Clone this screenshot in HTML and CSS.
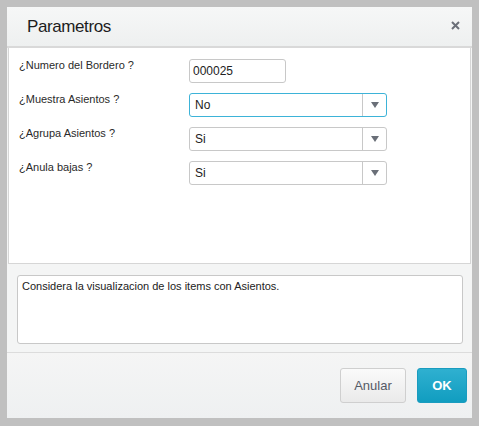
FILE: index.html
```html
<!DOCTYPE html>
<html lang="es">
<head>
    <meta charset="UTF-8">
    <title>Parametros</title>
    <link rel="stylesheet" href="styles.css">
</head>
<body>
    <div class="dialog">
        <header class="dialog-header">
            <h1>Parametros</h1>
            <svg class="close" width="9" height="9" viewBox="0 0 9 9">
                <path d="M1 1 L8 8 M8 1 L1 8" stroke="#6b6f78" stroke-width="2" />
            </svg>
        </header>
        <section class="params">
            <div class="row">
                <label>¿Numero del Bordero ?</label>
                <div class="field text-field">000025</div>
            </div>
            <div class="row">
                <label>¿Muestra Asientos ?</label>
                <div class="field select focused">
                    <span class="value">No</span>
                    <span class="arrow"></span>
                </div>
            </div>
            <div class="row">
                <label>¿Agrupa Asientos ?</label>
                <div class="field select">
                    <span class="value">Si</span>
                    <span class="arrow"></span>
                </div>
            </div>
            <div class="row">
                <label>¿Anula bajas ?</label>
                <div class="field select">
                    <span class="value">Si</span>
                    <span class="arrow"></span>
                </div>
            </div>
        </section>
        <div class="help">
            <div class="help-box">Considera la visualizacion de los items con Asientos.</div>
        </div>
        <footer class="dialog-footer">
            <button class="btn">Anular</button>
            <button class="btn btn-primary">OK</button>
        </footer>
    </div>
</body>
</html>
```

FILE: styles.css
```css
body {
    margin: 0;
    padding: 7px;
    background-color: #c0c0c0;
    font-family: "Liberation Sans", Arial, sans-serif;
}

.dialog {
    width: 465px;
    height: 411px;
    background-color: #f4f5f5;
    display: flex;
    flex-direction: column;
}

.dialog-header {
    height: 39px;
    display: flex;
    align-items: center;
    justify-content: space-between;
    padding: 0 12px 0 20px;
    background: linear-gradient(#f6f7f7, #eef0f0);
    border-bottom: 2px solid #d9d9d9;
}

h1 {
    margin: 0;
    font-size: 17px;
    letter-spacing: -0.4px;
    font-weight: normal;
    color: #1d1d1d;
}

.close {
    margin-top: -2px;
}

.params {
    height: 204px;
    margin: 0 1px;
    padding: 11px 10px 0 10px;
    background-color: #ffffff;
    border: 1px solid #d6d6d6;
    border-top: none;
}

.row {
    display: flex;
    align-items: flex-start;
    height: 24px;
    margin-bottom: 10px;
}

.row label {
    width: 170px;
    font-size: 11px;
    color: #2a2a2a;
    line-height: 12px;
}

.field {
    box-sizing: border-box;
    height: 24px;
    border: 1px solid #c8c8c8;
    border-radius: 3px;
    font-size: 12px;
    color: #222;
    display: flex;
    align-items: center;
}

.text-field {
    width: 97px;
    padding-left: 3px;
}

.select {
    width: 198px;
}

.select .value {
    flex: 1;
    padding-left: 5px;
}

.select .arrow {
    width: 23px;
    height: 100%;
    border-left: 1px solid #c8c8c8;
    display: flex;
    align-items: center;
    justify-content: center;
}

.select .arrow::after {
    content: "";
    border-left: 4px solid transparent;
    border-right: 4px solid transparent;
    border-top: 6px solid #6a6f78;
}

.focused {
    border-color: #3db3d8;
}

.help {
    padding: 11px 9px 8px 10px;
}

.help-box {
    box-sizing: border-box;
    height: 69px;
    background-color: #ffffff;
    border: 1px solid #c8c8c8;
    border-radius: 3px;
    padding: 4px 4px;
    font-size: 11px;
    color: #222;
}

.dialog-footer {
    flex: 1;
    display: flex;
    justify-content: flex-end;
    align-items: flex-start;
    gap: 11px;
    padding: 15px 5px 0 0;
    border-top: 1px solid #dcdcdc;
    background: linear-gradient(#f5f5f5, #eef0f1);
}

.btn {
    height: 35px;
    width: 66px;
    font-family: "Liberation Sans", Arial, sans-serif;
    font-size: 13px;
    color: #555a66;
    background: linear-gradient(#fafafa, #eaeaea);
    border: 1px solid #cfcfcf;
    border-radius: 3px;
}

.btn-primary {
    width: 50px;
    color: #ffffff;
    font-weight: bold;
    background: linear-gradient(#2fb0d0, #119dc0);
    border-color: #1a9cbf;
}
```
